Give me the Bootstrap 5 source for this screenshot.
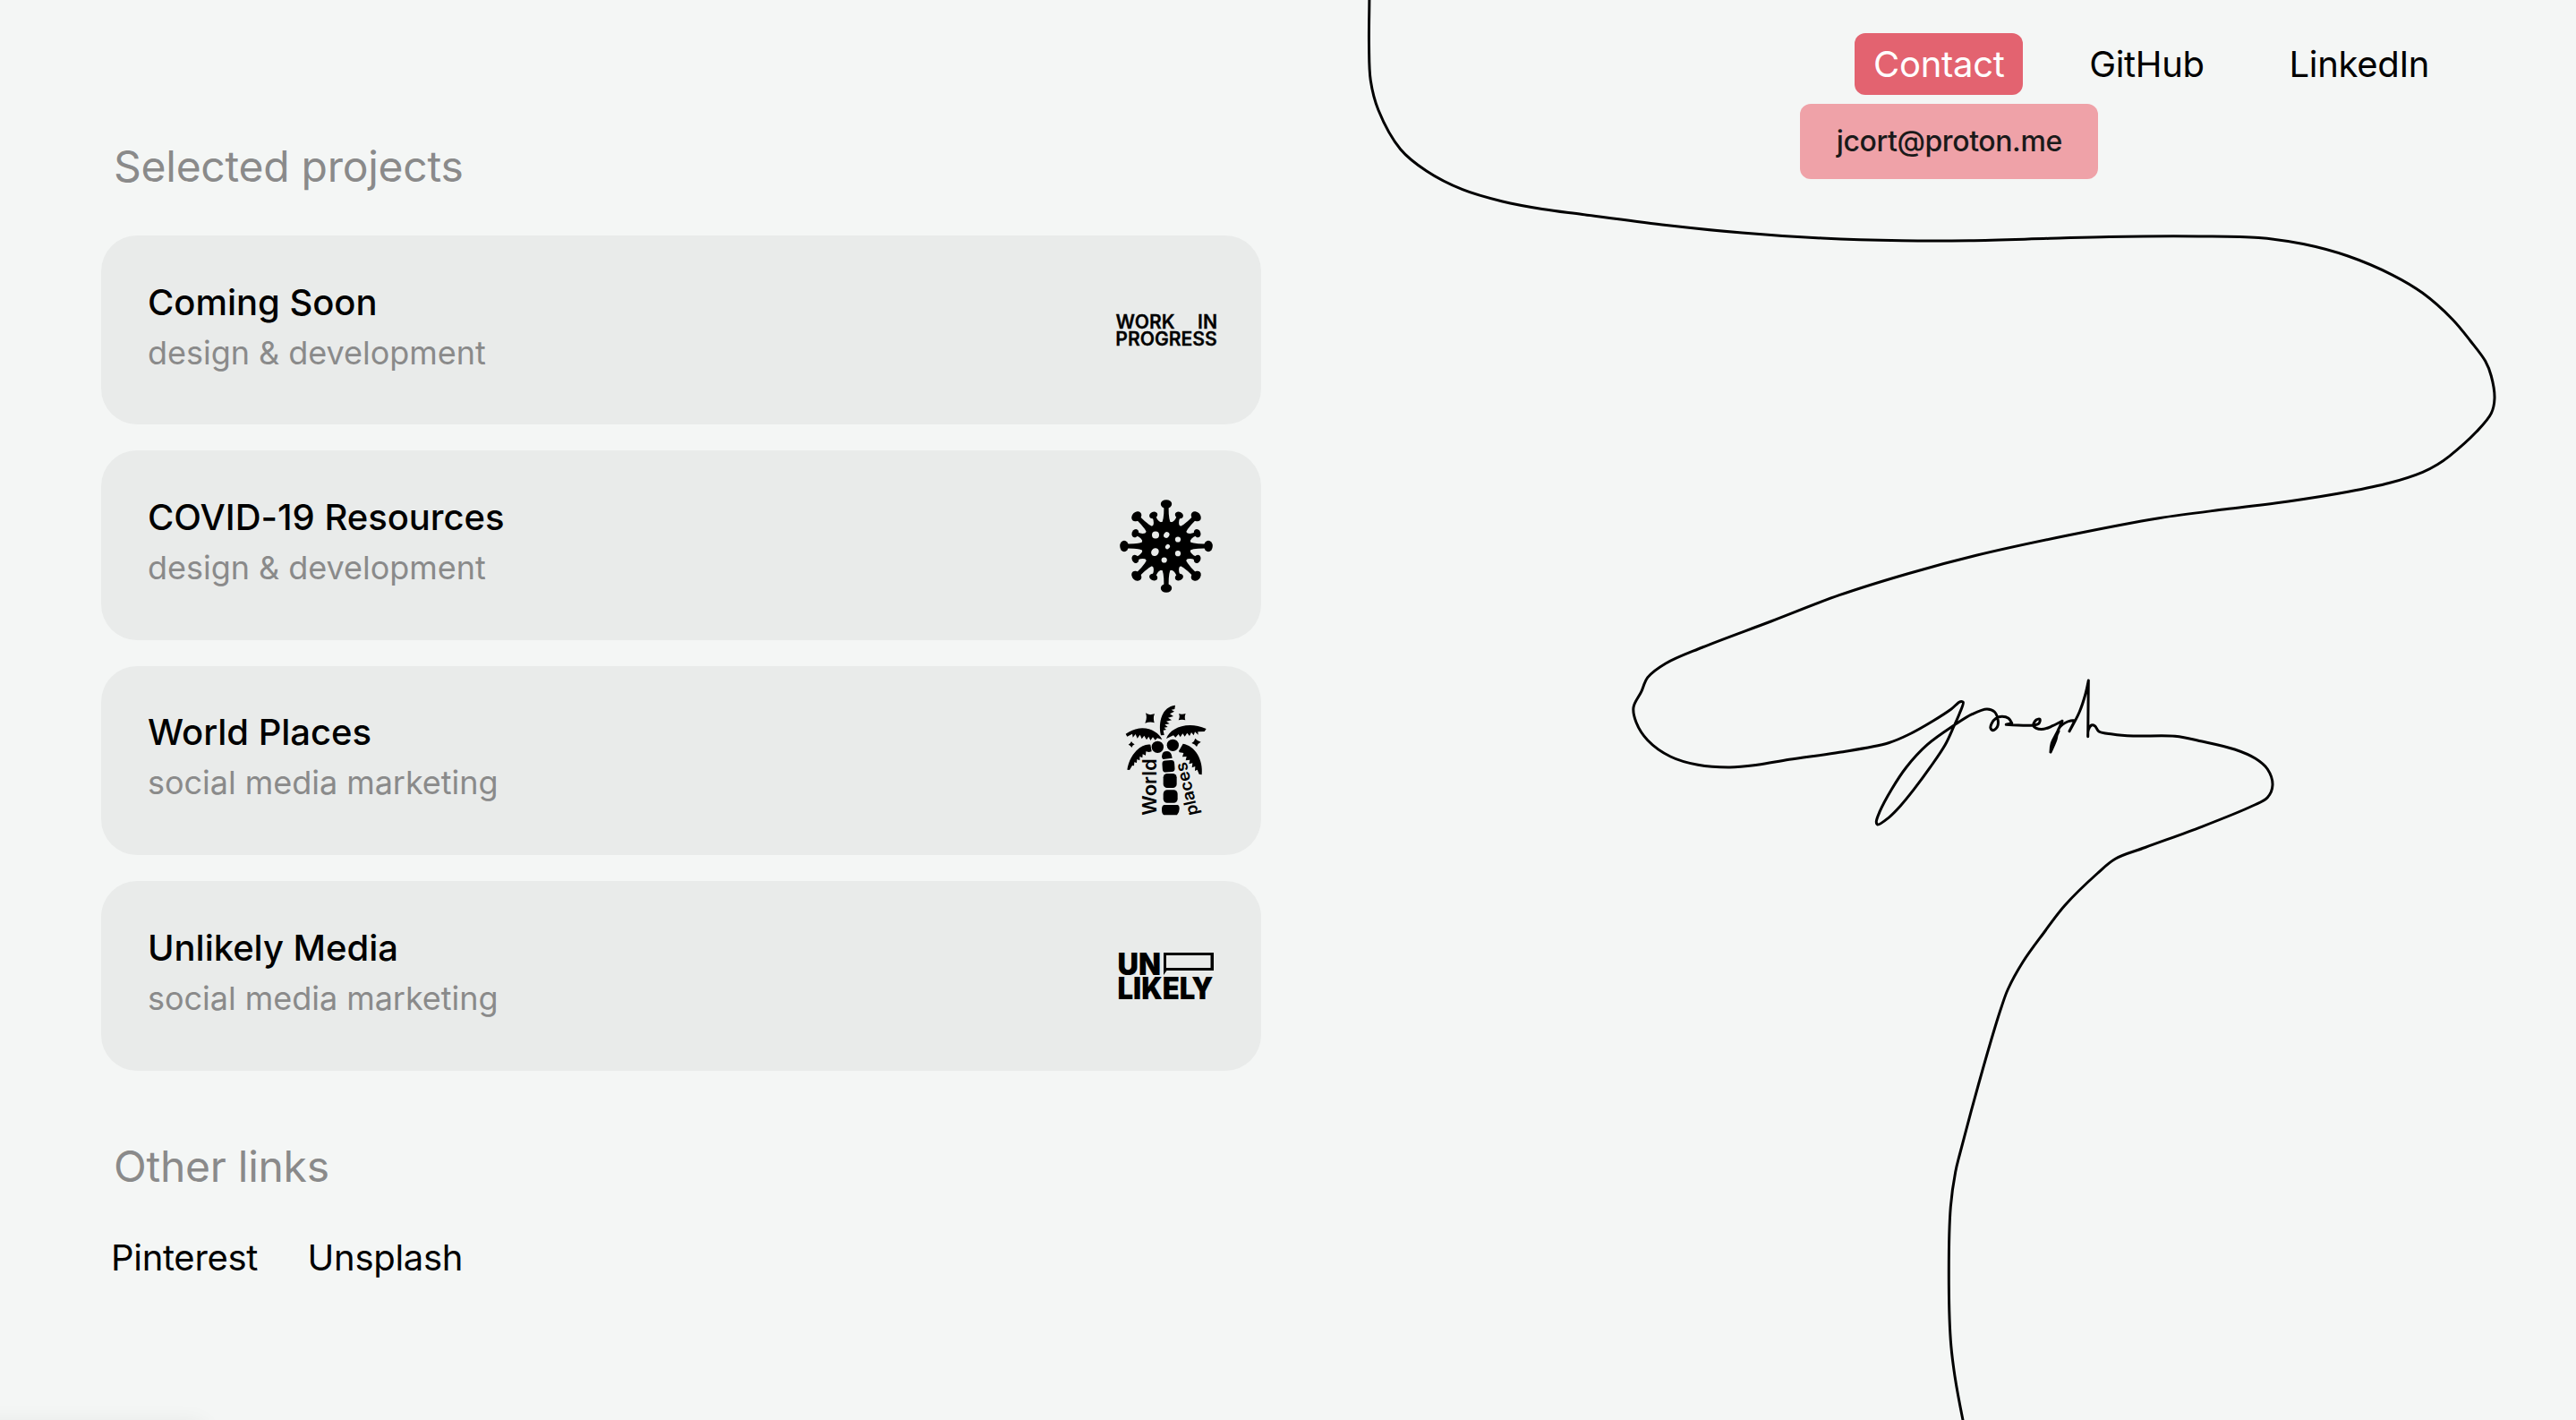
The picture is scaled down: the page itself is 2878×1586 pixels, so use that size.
<!DOCTYPE html>
<html lang="en">
<head>
<meta charset="utf-8">
<meta name="viewport" content="width=device-width, initial-scale=1">
<title>Joseph</title>
<link href="https://cdn.jsdelivr.net/npm/bootstrap@5.3.0/dist/css/bootstrap.min.css" rel="stylesheet">
<style>
  body { background: #f4f6f5; font-family: Inter, "Liberation Sans", sans-serif; color: #000; font-size: 40px; line-height: 48px; letter-spacing: -.3px; }
  .page { height: 1586px; }
  .projects { width: 1409px; padding: 156px 0 0 113px; }
  .section-title { font-size: 48px; line-height: 60px; font-weight: 400; color: #8a8a8a; padding-left: 14px; margin: 0 0 47px; letter-spacing: -.26px; }
  .section-title.other-title { margin-top: 77px; margin-bottom: 48px; }
  .project { height: 211.4px; border: 0; border-radius: 40px; background: #e9ebea; padding: 0 46px 0 52px; color: #000; letter-spacing: -.03px; }
  .project-list { gap: 29px; }
  .project-copy { padding-bottom: 6px; }
  .project-name { font-size: 40px; line-height: 56px; font-weight: 500; margin: 0; }
  .project-kind { font-size: 36px; line-height: 56px; color: #8a8a8a; margin: 0; }
  .project-logo { width: 120px; height: 130px; letter-spacing: 0; }
  .other-links { padding-left: 11px; gap: 55.5px; }
  .plain-link { color: #000; text-decoration: none; }
  .top-nav { padding: 37px 143px 0 0; gap: 53px; }
  .top-nav .nav-link { color: #000; padding: 0 20.8px; height: 69px; line-height: 69px; border-radius: 12px; }
  .top-nav .nav-link.active { color: #fff; background: #e36370; }
  .mail-menu { left: -61px; top: 79px; width: 333px; height: 84px; border-radius: 12px; background: #efa2a8; color: #1a1a1a; font-size: 32px; font-weight: 500; letter-spacing: -.4px; }
  .line-art { left: 0; top: 0; pointer-events: none; }
  .corner-shade { left: -40px; bottom: -42px; width: 270px; height: 40px; box-shadow: 0 0 24px rgba(0,0,0,.06); border-radius: 12px; }
</style>
<script src="https://cdn.jsdelivr.net/npm/bootstrap@5.3.0/dist/js/bootstrap.bundle.min.js"></script>
</head>
<body>
<div class="page d-flex position-relative overflow-hidden">
  <svg class="line-art position-absolute" width="2878" height="1586" viewBox="0 0 2878 1586" fill="none" stroke="#000" stroke-width="3" stroke-linecap="round" stroke-linejoin="round"><path id="signature"/></svg>

  <main class="projects flex-shrink-0">
    <h2 class="section-title">Selected projects</h2>
    <div class="project-list d-flex flex-column">
      <a class="project card flex-row align-items-center justify-content-between text-decoration-none" href="#">
        <div class="project-copy"><h3 class="project-name">Coming Soon</h3><p class="project-kind">design &amp; development</p></div>
        <svg class="project-logo" viewBox="1243 303 120 130" font-family="Inter, sans-serif" font-weight="600" font-size="21" stroke="#000" stroke-width=".3">
          <text x="1246.5" y="366.3" textLength="66" lengthAdjust="spacingAndGlyphs">WORK</text>
          <text x="1338" y="366.3" textLength="22" lengthAdjust="spacingAndGlyphs">IN</text>
          <text x="1246.3" y="385" textLength="113.5" lengthAdjust="spacingAndGlyphs">PROGRESS</text>
        </svg>
      </a>
      <a class="project card flex-row align-items-center justify-content-between text-decoration-none" href="#">
        <div class="project-copy"><h3 class="project-name">COVID-19 Resources</h3><p class="project-kind">design &amp; development</p></div>
        <svg class="project-logo" viewBox="-60 -66 120 130">
          <defs>
            <g id="spike"><path d="M-6-24Q-2.5-28-2.6-43H2.6Q2.5-28 6-24Z"/><ellipse cy="-47" rx="6.2" ry="4.8"/></g>
            <g id="stub"><path d="M-6.500-25Q-1.800-29-2-35H2Q1.800-29 6.500-25Z"/><ellipse cy="-37.500" rx="4.700" ry="3.700"/></g>
          </defs>
          <circle r="27.500"/>
          <use href="#spike"/><use href="#spike" transform="rotate(45)"/><use href="#spike" transform="rotate(90)"/><use href="#spike" transform="rotate(135)"/>
          <use href="#spike" transform="rotate(180)"/><use href="#spike" transform="rotate(225)"/><use href="#spike" transform="rotate(270)"/><use href="#spike" transform="rotate(315)"/>
          <use href="#stub" transform="rotate(22.500)"/><use href="#stub" transform="rotate(67.500)"/><use href="#stub" transform="rotate(112.500)"/><use href="#stub" transform="rotate(157.500)"/>
          <use href="#stub" transform="rotate(202.500)"/><use href="#stub" transform="rotate(247.500)"/><use href="#stub" transform="rotate(292.500)"/><use href="#stub" transform="rotate(337.500)"/>
          <g fill="#e9ebea"><circle cx="-12" cy="-12.500" r="4"/><ellipse cx=".3" cy="-12.500" rx="3" ry="3.600" transform="rotate(30 .3 -12.500)"/><circle cx="13" cy="-7.500" r="3.100"/><ellipse cx="1.500" cy=".6" rx="2.300" ry="2.900" transform="rotate(40 1.500 .6)"/><ellipse cx="-12.600" cy="6.600" rx="4" ry="4.700" transform="rotate(40 -12.600 6.600)"/><circle cx="13" cy="8.200" r="3.100"/><circle cx="-2.300" cy="15.500" r="3.100"/></g>
        </svg>
      </a>
      <a class="project card flex-row align-items-center justify-content-between text-decoration-none" href="#">
        <div class="project-copy"><h3 class="project-name">World Places</h3><p class="project-kind">social media marketing</p></div>
        <svg class="project-logo" viewBox="70 44 360 390">
          <path d="M232 156C222 110 236 60 280 55L278 68 267 70 277 76 262 84 274 92 256 97 268 105 250 109 261 117 245 120 255 128 243 130 250 137 240 139 243 155Z"/>
          <path d="M236 170C222 140 170 112 114 151L119 160 136 151 138 163 147 152 153 166 162 154 168 168 176 157 184 171 191 160 197 173 205 162 213 172 220 165Z"/>
          <path d="M250 167C262 132 320 106 384 134L378 143 356 144 357 154 346 144 342 156 334 146 328 158 320 148 312 160 305 150 297 162 291 152 281 163 274 156Z"/>
          <path d="M197 187C164 182 126 222 119 271L127 272 136 257 142 258 143 246 151 248 152 236 161 240 161 227 170 231 171 219 181 223 182 210 192 212 201 210Z"/>
          <path d="M306 184C346 190 375 238 369 288L360 286 354 271 346 275 347 260 336 264 338 249 326 252 329 238 315 240 318 227 304 228 308 215 294 213 292 208Z"/>
          <circle cx="221" cy="195" r="20"/><circle cx="272" cy="189" r="20"/>
          <path d="M236 222Q237 209 253 209 268 210 270 232L240 236Q233 232 236 222Z"/>
          <rect x="237" y="240" width="41" height="39" rx="11" transform="rotate(-4 257 260)"/>
          <rect x="240" y="284" width="45" height="48" rx="13"/>
          <rect x="240" y="339" width="48" height="43" rx="13"/>
          <path d="M243 389H288Q294 390 294 402T286 423H242Q235 420 235 405T243 389Z"/>
          <path d="M181 81Q191 90 211 84 205 96 210 114 196 109 179 115 187 99 181 81ZM292 83Q301 88 315 83 310 93 314 105 303 101 291 105 297 94 292 83ZM347 166Q353 174 366 178 355 183 352 194 346 185 335 182 345 177 347 166ZM133 176Q136 183 144 186 136 189 134 197 131 189 123 187 131 183 133 176Z"/>
          <g font-family="Inter, sans-serif" font-weight="600">
            <text transform="translate(217 424) rotate(-90)" font-size="66" textLength="190" lengthAdjust="spacingAndGlyphs">World</text>
            <text transform="translate(358 420) rotate(-103)" font-size="56" textLength="182" lengthAdjust="spacingAndGlyphs">places</text>
          </g>
        </svg>
      </a>
      <a class="project card flex-row align-items-center justify-content-between text-decoration-none" href="#">
        <div class="project-copy"><h3 class="project-name">Unlikely Media</h3><p class="project-kind">social media marketing</p></div>
        <svg class="project-logo" viewBox="1243 1025 120 130">
          <g font-family="Inter, sans-serif" font-weight="900" font-size="33.500"><text x="1248.500" y="1088.500" textLength="48.500" lengthAdjust="spacingAndGlyphs">UN</text><text x="1248.500" y="1116" textLength="107" lengthAdjust="spacingAndGlyphs">LIKELY</text></g>
          <path d="M1300 1064H1356V1084H1303.500L1300 1089ZM1303 1067V1081H1352.500V1067Z" fill-rule="evenodd"/>
        </svg>
      </a>
    </div>
    <h2 class="section-title other-title">Other links</h2>
    <div class="other-links d-flex"><a class="plain-link" href="#">Pinterest</a><a class="plain-link" href="#">Unsplash</a></div>
  </main>

  <header class="flex-grow-1">
    <nav class="top-nav nav justify-content-end">
      <div class="position-relative">
        <a class="nav-link active" href="#">Contact</a>
        <div class="mail-menu position-absolute d-flex align-items-center justify-content-center">jcort@proton.me</div>
      </div>
      <a class="nav-link" href="#">GitHub</a>
      <a class="nav-link" href="#">LinkedIn</a>
    </nav>
  </header>
  <div class="corner-shade position-absolute"></div>
</div>
<script>
  // Strokes of the signature line; each stroke is a smooth curve, joined to the next at a sharp corner.
  const strokes = [
    [1529.9,-20,1529.9,0,1529.5,50,1531.3,90,1540,123,1564.7,166.7,1593.8,191,1634,211.7,1678.600,225,1723,233.500,1768,239.500,1857,251,1946.400,260,2035.700,266,2125,268.700,2200,268.700,2290,266.300,2356.700,264.500,2456.700,264,2523.300,265.600,2573.300,272.500,2623.300,286,2673.300,307.300,2706.700,327.300,2740,356.700,2760,380.700,2776.700,403.300,2783.300,420,2787,445,2783.300,461.700,2766.700,482.300,2736.700,509.300,2723.300,518.700,2706.700,527.300,2670,539.300,2623.300,549.300,2556.700,560,2490,568.300,2412,578.700,2310,598,2208,620.300,2131.600,640.700,2055,664.700,1978.600,694,1902,723,1861,741,1840.800,756.700,1833.700,772.700,1825,790,1828,806.700,1840.800,826.700,1866.300,845,1897,854.300,1932.700,857,1963.300,854.300,1999,848.300,2055,840.300,2110,829.700,2133.300,820,2160,805,2180,792,2190,783.700,2193.300,784.300,2189.300,796.700,2182.700,811.700,2173.300,831.700,2156.700,856.700,2138.300,881.700,2123.300,900,2110,913.300,2097.700,921,2096.300,918,2100,906.700,2113.300,881.700,2130,856.700,2153.300,831.700,2183.300,810,2203.300,797.700,2220,792,2228.300,795,2232.300,805,2231.500,811.700,2226.700,815.700,2224,813.300,2225,808.300,2230,802.300,2236.700,800.300,2244,802.300,2247.700,807.700],
    [2247.700,807.700,2241.300,809.300],
    [2241.300,809.300,2271.700,810,2278,808,2279,803.300,2275,804,2271.700,810,2275,813.300,2283.300,814.300,2293.300,810.700,2304,805.300],
    [2304,805.300,2298.300,818,2292.300,830,2291,840],
    [2291,840,2294,831,2300,816.700],
    [2291,840,2297,826,2300,814,2310,806,2318.300,804.500],
    [2318.300,804.500,2312,816.700],
    [2312,816.700,2323.300,795,2330,775,2333.300,760],
    [2333.300,760,2332.700,822.700],
    [2332.700,822.700,2333.300,815,2336.700,810,2340.700,811,2345,817,2360,820,2383.300,822,2430,822.300,2460,828,2496.700,837,2520,847.300,2533.300,859,2539,876.700,2533.300,890.700,2516.700,900,2460,923.300,2396.700,946.500,2363.300,959.200,2343.300,975.500,2306.700,1011.500,2283.300,1042,2260,1074.500,2243.300,1105,2236,1125,2229,1147,2210.500,1211,2189.800,1288,2184.700,1309,2179.300,1348,2177.300,1420,2179.300,1496.800,2184,1537,2193,1586,2197,1604]
  ];
  const curve = flat => {
    const p = []; for (let i = 0; i < flat.length; i += 2) p.push([flat[i], flat[i + 1]]);
    const dist = (a, b) => Math.sqrt(Math.hypot(a[0] - b[0], a[1] - b[1])) || 1;
    let d = `M${p[0]}`;
    for (let i = 0; i < p.length - 1; i++) {
      const a = p[i - 1] || p[i], b = p[i], c = p[i + 1], e = p[i + 2] || c;
      const t1 = dist(a, b), t2 = dist(b, c), t3 = dist(c, e);
      const c1 = i ? [0, 1].map(k => (t1*t1*c[k] - t2*t2*a[k] + (2*t1*t1 + 3*t1*t2 + t2*t2)*b[k]) / (3*t1*(t1 + t2))) : b;
      const c2 = p[i + 2] ? [0, 1].map(k => (t3*t3*b[k] - t2*t2*e[k] + (2*t3*t3 + 3*t3*t2 + t2*t2)*c[k]) / (3*t3*(t3 + t2))) : c;
      d += `C${c1} ${c2} ${c}`;
    }
    return d;
  };
  document.getElementById('signature').setAttribute('d', strokes.map(curve).join(''));
</script>
</body>
</html>
